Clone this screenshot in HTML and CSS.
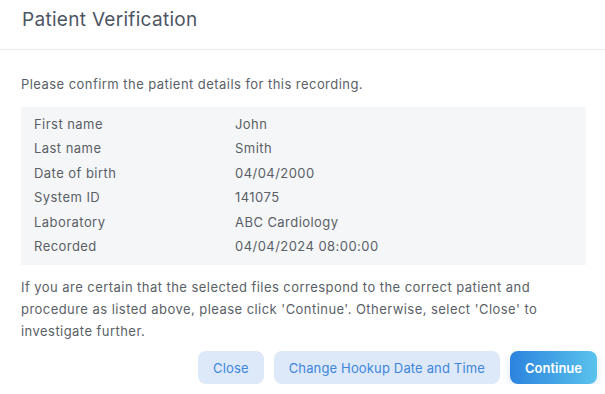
FILE: index.html
```html
<!DOCTYPE html>
<html lang="en">
<head>
  <meta charset="utf-8">
  <title>Patient Verification</title>
  <link rel="stylesheet" href="styles.css">
</head>
<body>
  <div class="dialog" role="dialog" aria-labelledby="dialog-title">
    <header class="dialog-header">
      <h2 id="dialog-title">Patient Verification</h2>
    </header>

    <div class="dialog-body">
      <p class="intro">Please confirm the patient details for this recording.</p>

      <dl class="details">
        <dt>First name</dt><dd>John</dd>
        <dt>Last name</dt><dd>Smith</dd>
        <dt>Date of birth</dt><dd>04/04/2000</dd>
        <dt>System ID</dt><dd>141075</dd>
        <dt>Laboratory</dt><dd>ABC Cardiology</dd>
        <dt>Recorded</dt><dd>04/04/2024 08:00:00</dd>
      </dl>

      <p class="note">If you are certain that the selected files correspond to the correct patient and procedure as listed above, please click 'Continue'. Otherwise, select 'Close' to investigate further.</p>
    </div>

    <footer class="dialog-actions">
      <button type="button" class="btn btn-soft">Close</button>
      <button type="button" class="btn btn-soft">Change Hookup Date and Time</button>
      <button type="button" class="btn btn-primary">Continue</button>
    </footer>
  </div>
</body>
</html>
```

FILE: styles.css
```css
body {
  margin: 0;
  background: #fff;
  font-family: Inter, "Noto Sans", sans-serif;
  color: #5a5f67;
}

.dialog {
  width: 605px;
}

.dialog-header {
  height: 49px;
  padding: 0 22px;
  display: flex;
  align-items: center;
  border-bottom: 1px solid #e8eaed;
}

.dialog-header h2 {
  margin: 0;
  font-size: 19px;
  font-weight: 400;
  letter-spacing: 0.3px;
  color: #4d5562;
  position: relative;
  top: -5px;
}

.dialog-body {
  padding: 24px 19px 0 21px;
  letter-spacing: 0.45px;
}

.intro {
  margin: 0 0 13px;
  font-size: 13px;
  line-height: 20px;
}

.details {
  margin: 0;
  padding: 5px 13px 7px;
  background: #f5f6f8;
  display: grid;
  grid-template-columns: 201px 1fr;
  font-size: 13px;
  line-height: 24.4px;
}

.details dt,
.details dd {
  margin: 0;
}

.note {
  margin: 11px 0 0;
  font-size: 13px;
  line-height: 22px;
}

.dialog-actions {
  display: flex;
  justify-content: flex-end;
  gap: 10px;
  padding: 9px 8px 0 0;
}

.btn {
  height: 33px;
  padding: 0 15px;
  border: none;
  border-radius: 8px;
  font-family: Inter, "Noto Sans", sans-serif;
  font-size: 13px;
  letter-spacing: 0.15px;
  cursor: pointer;
}

.btn-soft {
  background: #dde9f8;
  color: #3d86dc;
}

.btn-primary {
  padding: 0 15px;
  background: linear-gradient(90deg, #2c83de, #5ac3ec);
  color: #fff;
  font-weight: 600;
  letter-spacing: 0;
  box-shadow: 0 4px 10px rgba(60, 130, 220, 0.18);
}
```
